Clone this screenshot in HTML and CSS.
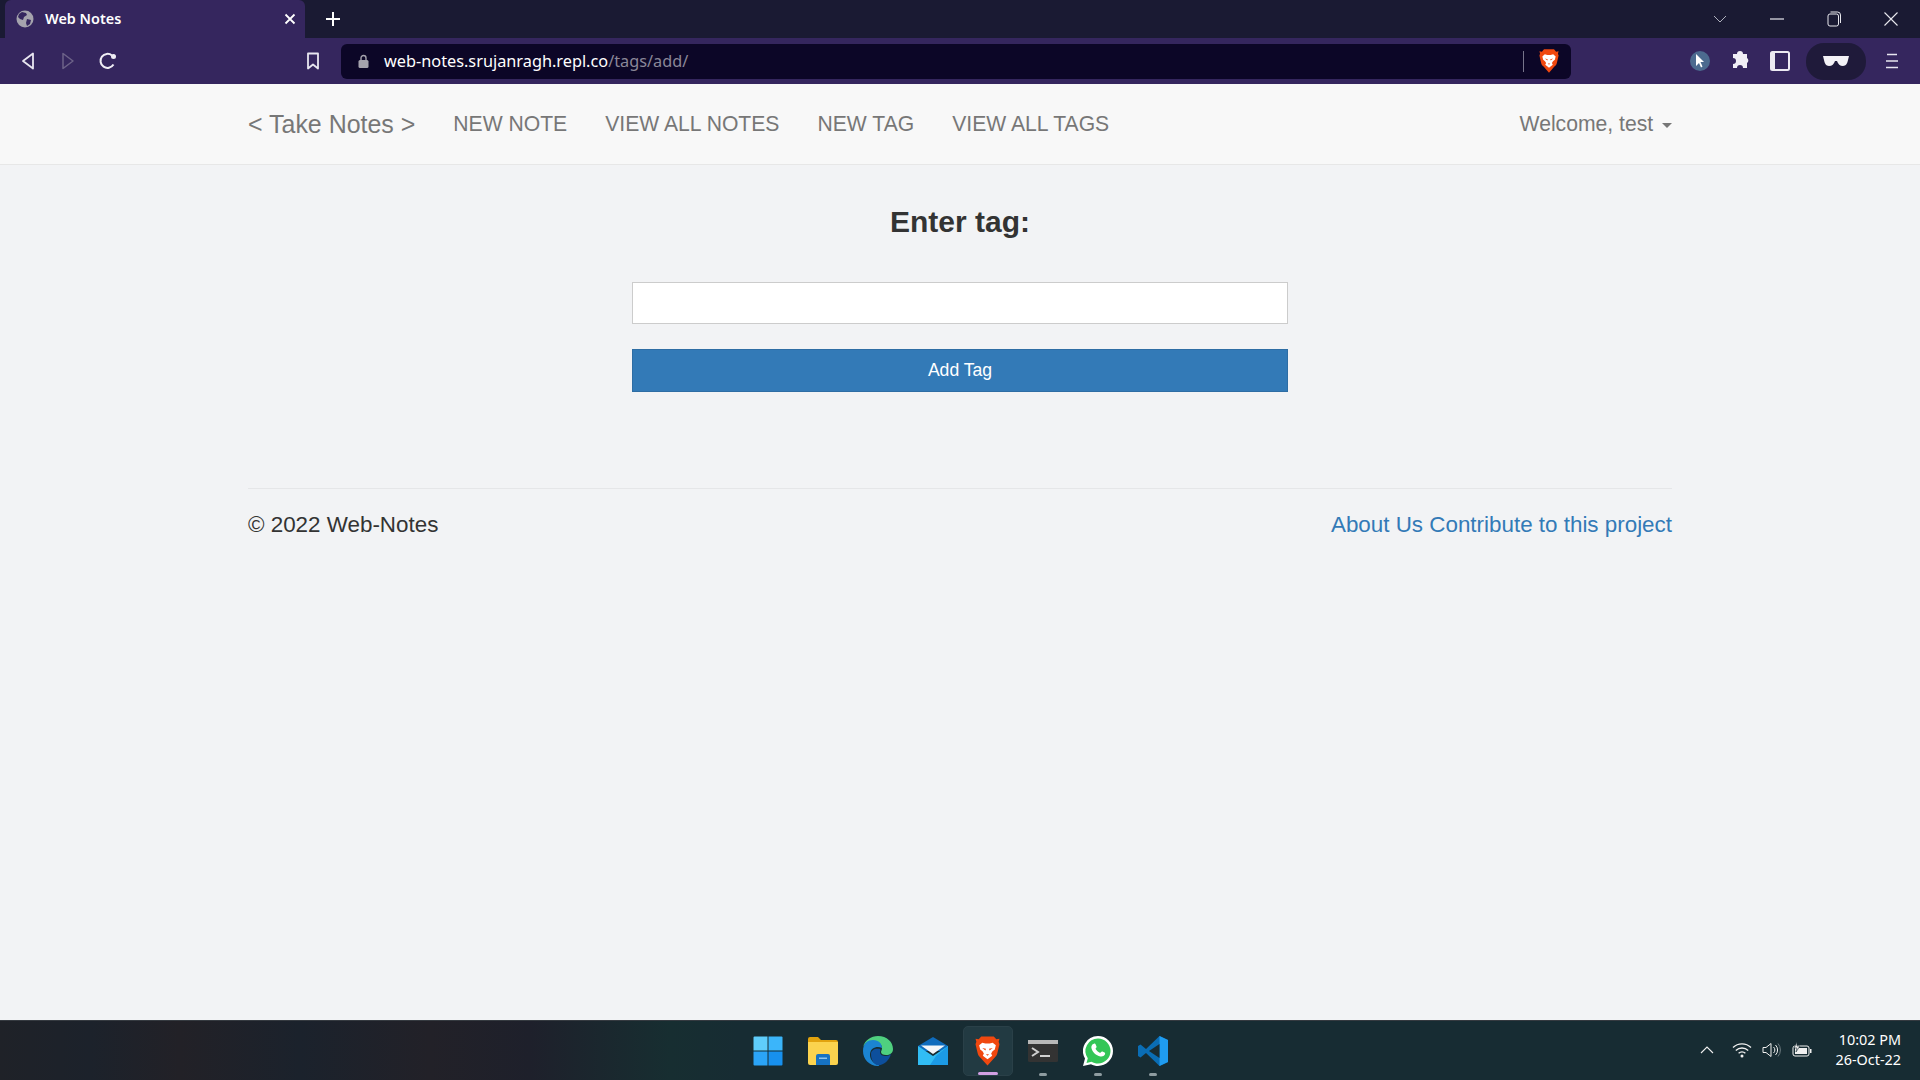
FILE: index.html
```html
<!DOCTYPE html>
<html>
<head>
    <title>Web Notes</title>
    <link rel="stylesheet" href="styles.css">
</head>
<body>
<svg class="defs" width="0" height="0">
    <symbol id="brave" viewBox="0 0 24 28">
        <path d="M6 0h12l2.500 2.800 3-.6-.8 3 .8 2.300-2 8.500c-.5 2-1.300 3.400-3 4.600L12 28l-6.500-7.400c-1.700-1.200-2.500-2.600-3-4.600l-2-8.500.8-2.300-.8-3 3 .6z" fill="#f0480f"/>
        <path d="M7 6l3 .8h4L17 6l3 2.500-1 4-2.200 1.800-1.300 2 1 2.200L12 22l-4.500-3.500 1-2.200-1.300-2L5 12.500l-1-4z" fill="#fff"/>
        <path d="M7 11l3.500.8-.5 1.700zM17 11l-3.500.8.5 1.700zM10.500 17h3L12 18.500z" fill="#f0480f"/>
    </symbol>
</svg>
<div class="browser">
    <div class="tabstrip">
        <div class="tab">
            <svg class="favicon" width="18" height="18" viewBox="0 0 18 18"><circle cx="9" cy="9" r="8.500" fill="#a5a3ad"/><path d="M6 2l4 1 1 2-3 2-1 3-3-1-2-2 1-3zM11 9l4 1-1 4-3 2-1-3z" fill="#35265e"/></svg>
            <span class="tab_title">Web Notes</span>
            <svg class="tab_close" width="12" height="12" viewBox="0 0 12 12"><path d="M1.500 1.500l9 9M10.500 1.500l-9 9" stroke="#fff" stroke-width="1.800"/></svg>
        </div>
        <svg class="newtab" width="16" height="16" viewBox="0 0 16 16"><path d="M8 1v14M1 8h14" stroke="#fff" stroke-width="2"/></svg>
        <div class="window_btns">
            <svg width="14" height="8" viewBox="0 0 14 8"><path d="M1 1l6 6 6-6" stroke="#aeb0bd" fill="none"/></svg>
            <svg width="14" height="2" viewBox="0 0 14 2"><path d="M0 1h14" stroke="#e8e8ee" stroke-width="1.200"/></svg>
            <svg width="14" height="16" viewBox="0 0 14 16"><rect x="1" y="3" width="10.500" height="12" rx="2" stroke="#e8e8ee" fill="none"/><path d="M3.500 1h7a3 3 0 0 1 3 3v8" stroke="#e8e8ee" fill="none"/></svg>
            <svg width="14" height="14" viewBox="0 0 14 14"><path d="M.5.5l13 13M13.500.5l-13 13" stroke="#e8e8ee" stroke-width="1.100"/></svg>
        </div>
    </div>

    <div class="toolbar">
        <div class="nav_btns">
            <svg width="14" height="18" viewBox="0 0 14 18"><path d="M12 1.500v15L2 9z" stroke="#e8e6f0" stroke-width="1.800" fill="none" stroke-linejoin="round"/></svg>
            <svg width="14" height="18" viewBox="0 0 14 18"><path d="M2 1.500v15L12 9z" stroke="#6c6288" stroke-width="1.500" fill="none" stroke-linejoin="round"/></svg>
            <svg width="18" height="18" viewBox="0 0 18 18"><path d="M14.500 12.500A7 7 0 1 1 13 3.500" stroke="#f0eef5" stroke-width="2" fill="none"/><circle cx="14.500" cy="4.500" r="2.500" fill="#f0eef5"/></svg>
        </div>
        <svg class="bookmark" width="14" height="18" viewBox="0 0 14 18"><path d="M2 1.500h10v15l-5-4-5 4z" stroke="#e8e6f0" stroke-width="1.800" fill="none" stroke-linejoin="round"/></svg>
        <div class="urlbar">
            <svg class="lock" width="11" height="14" viewBox="0 0 11 14"><path d="M3 6V4a2.500 2.500 0 0 1 5 0v2" stroke="#a5a3ad" stroke-width="1.400" fill="none"/><rect x="0.500" y="6" width="10" height="8" rx="1.500" fill="#a5a3ad"/></svg>
            <span class="url_host">web-notes.srujanragh.repl.co</span><span class="url_path">/tags/add/</span>
            <div class="url_end">
                <span class="url_divider"></span>
                <svg width="20" height="24"><use href="#brave"/></svg>
            </div>
        </div>
        <div class="ext_btns">
            <span class="ext_cursor"><svg width="10" height="14" viewBox="0 0 10 14"><path d="M1 0l8 8H5.500l2 4.500-1.500 1-2-4.500L1 12z" fill="#fff"/></svg></span>
            <svg width="20" height="20" viewBox="0 0 20 20"><path d="M7 4a3 3 0 0 1 6 0h4v4a3 3 0 0 1 0 5v5h-4a3 3 0 0 0-6 0H3v-4a3 3 0 0 0 0-6V4z" fill="#f0eef5" transform="translate(0 -1)"/></svg>
            <svg width="20" height="20" viewBox="0 0 20 20"><rect x="1" y="1" width="18" height="18" rx="1.500" stroke="#ece9f2" stroke-width="2" fill="#35265e"/><rect x="1" y="1" width="4" height="18" fill="#ece9f2"/></svg>
        </div>
        <div class="glasses">
            <svg width="26" height="10" viewBox="0 0 26 10"><path d="M0 0h26l-1 4c-.500 3-2 6-5 6s-5-2-6-5h-2c-1 3-3 5-6 5S1.500 7 1 4z" fill="#f4f2f7"/></svg>
        </div>
        <svg class="menu_btn" width="14" height="16" viewBox="0 0 14 16"><path d="M2 1.500h10M1 8h12M1 14.500h12" stroke="#e8e6f0" stroke-width="1.700"/></svg>
    </div>

    <div class="navbar">
        <div class="nav_inner">
            <a class="brand">&lt; Take Notes &gt;</a>
            <a class="nav_link">NEW NOTE</a>
            <a class="nav_link">VIEW ALL NOTES</a>
            <a class="nav_link">NEW TAG</a>
            <a class="nav_link">VIEW ALL TAGS</a>
            <a class="welcome">Welcome, test <span class="caret"></span></a>
        </div>
    </div>

    <div class="main">
        <h2 class="heading">Enter tag:</h2>
        <input class="tag_input" type="text">
        <button class="add_btn">Add Tag</button>
        <div class="footer">
            <span>&copy; 2022 Web-Notes</span>
            <span class="footer_links"><a>About Us</a> <a>Contribute to this project</a></span>
        </div>
    </div>

    <div class="taskbar">
        <div class="task_apps">
            <div class="task_item">
                <svg width="30" height="30" viewBox="0 0 30 30"><path d="M.500 1.500a1 1 0 0 1 1-1h13v14H.500z" fill="#5fcdfb"/><path d="M15.500.500h13a1 1 0 0 1 1 1v13h-14z" fill="#3bb5fa"/><path d="M.500 15.500h14v14h-13a1 1 0 0 1-1-1z" fill="#2ba4f7"/><path d="M15.500 15.500h14v13a1 1 0 0 1-1 1h-13z" fill="#1790ee"/></svg>
            </div>
            <div class="task_item">
                <svg width="30" height="28" viewBox="0 0 30 28"><path d="M0 2a2 2 0 0 1 2-2h8l3 3h15a2 2 0 0 1 2 2v3H0z" fill="#e2a30e"/><path d="M0 5h30v21a2 2 0 0 1-2 2H2a2 2 0 0 1-2-2z" fill="#fbd34e"/><path d="M8 19a2 2 0 0 1 2-2h10a2 2 0 0 1 2 2v9H8z" fill="#1672c2"/><rect x="11" y="20.500" width="8" height="1.500" fill="#8cc4ee"/></svg>
            </div>
            <div class="task_item">
                <svg width="30" height="30" viewBox="0 0 30 30"><path d="M15 0c9 0 15 6 15 13 0 4-3 6-7 6-3 0-5-1-5-3 0-1 1-2 1-4 0-4-4-7-9-7-4 0-8 2-10 6C2 4 8 0 15 0z" fill="#4fd07f"/><path d="M0 15C0 7 5 4 10 4c6 0 9 4 9 8-4-2-12-1-12 7 0 5 4 9 9 10 1 .5-1 1-1 1C6 30 0 23 0 15z" fill="#1b84d2"/><path d="M8 18c0-4 4-6 9-5 1 1 0 2 0 3 0 3 3 4 6 4 2 0 4-1 5-2-2 7-8 12-14 11-3-1-6-5-6-11z" fill="#0d4f9c"/></svg>
            </div>
            <div class="task_item">
                <svg width="30" height="28" viewBox="0 0 30 28"><path d="M15 0l15 9v5H0V9z" fill="#0f6cbd"/><path d="M3 8.500h24L15 17z" fill="#f4f6f8"/><path d="M0 9l15 10L30 9v19H0z" fill="#31bdf4"/><path d="M30 28H12l6-9 12-10z" fill="#1c9be6"/></svg>
            </div>
            <div class="task_item task_active">
                <svg width="25" height="30"><use href="#brave"/></svg>
                <span class="task_dot dot_active"></span>
            </div>
            <div class="task_item">
                <svg width="30" height="22" viewBox="0 0 30 22"><rect width="30" height="22" rx="1.500" fill="#333"/><rect width="30" height="4" fill="#b8b8b8"/><path d="M4 8l6 4-6 4" stroke="#d0d0d0" stroke-width="2" fill="none"/><path d="M12 16h10" stroke="#d0d0d0" stroke-width="2"/></svg>
                <span class="task_dot"></span>
            </div>
            <div class="task_item">
                <svg width="30" height="30" viewBox="0 0 30 30"><path d="M15 0a15 15 0 0 1 0 30c-2.500 0-5-.7-7-1.800L0 30l2-7.500A15 15 0 0 1 15 0z" fill="#fff"/><path d="M15 2.500a12.500 12.500 0 0 1 0 25c-2.400 0-4.500-.7-6.500-1.800l-5 1.300 1.300-4.800A12.500 12.500 0 0 1 15 2.500z" fill="#33c657"/><path d="M10.500 8c1-.8 1.800-.5 2.200.4l.8 2c.2.500 0 1-.7 1.800-.3.300-.3.600 0 1 1 1.600 2.200 2.700 3.900 3.500.4.200.700.100 1-.2.800-1 1.200-1.200 1.800-.9l2 1c.7.400.8 1 .4 2-.7 1.500-2.800 2.200-4.500 1.800-4.500-1-8-4.500-9-8.500-.3-1.500.5-3 1.600-3.900z" fill="#fff"/></svg>
                <span class="task_dot"></span>
            </div>
            <div class="task_item">
                <svg width="30" height="30" viewBox="0 0 30 30"><path d="M21.500 0L30 4v22l-8.500 4L8 17l-5.500 4.500L0 20V10l2.500-1.500L8 13z" fill="#0a6db5"/><path d="M21.500 0L30 4v22l-8.500 4z" fill="#1f9cf0"/><path d="M21.500 8L11 15l10.500 7z" fill="#182c33"/></svg>
                <span class="task_dot"></span>
            </div>
        </div>
        <div class="tray">
            <svg class="tray_chevron" width="14" height="8" viewBox="0 0 14 8"><path d="M1 7l6-6 6 6" stroke="#f0f0f0" stroke-width="1.100" fill="none"/></svg>
            <svg class="tray_wifi" width="20" height="16" viewBox="0 0 20 16"><path d="M1 5.500a13 13 0 0 1 18 0M3.800 8.500a9 9 0 0 1 12.400 0M6.600 11.300a5 5 0 0 1 6.800 0" stroke="#f0f0f0" stroke-width="1.300" fill="none"/><circle cx="10" cy="14" r="1.500" fill="#f0f0f0"/></svg>
            <svg class="tray_icon" width="20" height="16" viewBox="0 0 20 16"><path d="M1 5.500h3L9 1.500v13l-5-4H1z" stroke="#f0f0f0" fill="none"/><path d="M11.500 5a4 4 0 0 1 0 6M13.500 3a7 7 0 0 1 0 10" stroke="#f0f0f0" fill="none"/><path d="M16 1.500a10 10 0 0 1 0 13" stroke="#6c7a7f" fill="none"/></svg>
            <svg class="tray_icon" width="20" height="16" viewBox="0 0 20 16"><rect x="1" y="4" width="16" height="10" rx="2" stroke="#f0f0f0" fill="none"/><rect x="3" y="6" width="12" height="6" fill="#f0f0f0"/><rect x="18" y="7" width="1.500" height="4" fill="#f0f0f0"/><path d="M5 0L2 6h3l-1 4 4-6H5z" fill="#f0f0f0" stroke="#182c33" stroke-width=".6"/></svg>
            <div class="clock">
                <div>10:02 PM</div>
                <div>26-Oct-22</div>
            </div>
        </div>
    </div>
</div>
</body>
</html>
```

FILE: styles.css
```css
* {
  box-sizing: border-box;
}

body {
  margin: 0;
  background-color: #f2f3f5;
  color: #333;
  font-family: "Liberation Sans", Arial, sans-serif;
}

a {
  text-decoration: none;
}

.defs {
  display: block;
}

.browser {
  display: flex;
  flex-direction: column;
  height: 1080px;
  overflow: hidden;
}

/* tab strip */
.tabstrip {
  display: flex;
  align-items: center;
  height: 38px;
  padding-left: 5px;
  background-color: #1a1a33;
}

.tab {
  display: flex;
  align-items: center;
  width: 300px;
  height: 38px;
  padding: 0 9px 0 11px;
  background-color: #35265e;
  border-radius: 6px 6px 0 0;
}

.tab_title {
  flex: 1;
  margin-left: 11px;
  margin-bottom: 2px;
  color: #fff;
  font-family: "Noto Sans", sans-serif;
  font-size: 14.4px;
  font-weight: 600;
}

.newtab {
  margin-left: 20px;
}

.window_btns {
  display: flex;
  align-items: center;
  justify-content: space-between;
  width: 185px;
  margin-left: auto;
  margin-right: 22px;
}

/* toolbar */
.toolbar {
  display: flex;
  align-items: center;
  height: 46px;
  padding-left: 8px;
  background-color: #35265e;
}

.nav_btns {
  display: flex;
  width: 120px;
}

.nav_btns svg {
  width: 40px;
}

.bookmark {
  margin-left: 178px;
}

.urlbar {
  display: flex;
  align-items: center;
  width: 1230px;
  height: 35px;
  margin-left: 21px;
  padding-left: 17px;
  background-color: #0c0627;
  border-radius: 6px;
}

.url_host {
  margin-left: 15px;
  color: #fff;
  font-family: "Noto Sans", sans-serif;
  font-size: 16.3px;
}

.url_path {
  color: #8a8798;
  font-family: "Noto Sans", sans-serif;
  font-size: 16.3px;
}

.url_end {
  display: flex;
  align-items: center;
  margin-left: auto;
  padding-right: 12px;
}

.url_divider {
  width: 1px;
  height: 21px;
  margin-right: 15px;
  background-color: #77748a;
}

.ext_btns {
  display: flex;
  align-items: center;
  margin-left: 119px;
  gap: 20px;
}

.ext_cursor {
  display: flex;
  align-items: center;
  justify-content: center;
  width: 20px;
  height: 20px;
  background-color: #4c6a8f;
  border-radius: 50%;
}

.glasses {
  display: flex;
  align-items: center;
  justify-content: center;
  width: 60px;
  height: 37px;
  margin-left: 16px;
  background-color: #1f1a3a;
  border-radius: 18px;
}

.menu_btn {
  margin-left: 19px;
}

/* navbar */
.navbar {
  height: 81px;
  background-color: #f8f8f8;
  border-bottom: 1px solid #e7e7e7;
}

.nav_inner {
  display: flex;
  align-items: center;
  width: 1424px;
  height: 80px;
  margin: 0 auto;
  color: #777;
}

.brand {
  font-size: 24.95px;
  margin-right: 38px;
}

.nav_link {
  font-size: 21.15px;
  margin-right: 38px;
}

.welcome {
  margin-left: auto;
  font-size: 21.15px;
}

.caret {
  display: inline-block;
  margin-left: 3px;
  vertical-align: middle;
  border-top: 5px solid #777;
  border-left: 5px solid transparent;
  border-right: 5px solid transparent;
}

/* form */
.main {
  display: flex;
  flex: 1;
  flex-direction: column;
  align-items: center;
}

.heading {
  margin: 39px 0 0;
  font-size: 30px;
  line-height: 36px;
}

.tag_input {
  width: 656px;
  height: 42px;
  margin-top: 42px;
  background-color: #fff;
  border: 1px solid #ccc;
}

.add_btn {
  width: 656px;
  height: 43px;
  margin-top: 25px;
  background-color: #337ab7;
  color: #fff;
  font-family: "Liberation Sans", Arial, sans-serif;
  font-size: 17.6px;
  border: 1px solid #2e6da4;
}

.footer {
  display: flex;
  justify-content: space-between;
  width: 1424px;
  margin-top: 96px;
  padding-top: 23px;
  font-size: 22.4px;
  border-top: 1px solid #e5e6e8;
}

.footer_links {
  color: #337ab7;
}

/* taskbar */
.taskbar {
  display: flex;
  justify-content: center;
  position: relative;
  height: 60px;
  background: linear-gradient(90deg, #1f2228 0, #1c222b 90px, #222127 180px, #1b222c 300px, #222128 430px, #1e202b 530px, #172e31 670px, #172c33 740px);
  border-top: 1px solid #353a40;
}

.task_apps {
  display: flex;
  align-items: center;
}

.task_item {
  display: flex;
  align-items: center;
  justify-content: center;
  position: relative;
  width: 50px;
  height: 50px;
  margin: 0 2.5px;
  border-radius: 5px;
}

.task_active {
  background-color: #223a42;
  border: 1px solid #2a4048;
}

.task_dot {
  position: absolute;
  bottom: 0;
  width: 8px;
  height: 3px;
  background-color: #8e9ca1;
  border-radius: 2px;
}

.dot_active {
  width: 20px;
  background-color: #d19fe3;
}

.tray {
  display: flex;
  align-items: center;
  position: absolute;
  top: 0;
  right: 19px;
  height: 58px;
  color: #fff;
  font-family: "Noto Sans", sans-serif;
  font-size: 14.4px;
}

.tray_wifi {
  margin-left: 18px;
}

.tray_icon {
  margin-left: 10px;
}

.clock {
  width: 80px;
  margin-left: 9px;
  line-height: 20px;
  text-align: right;
}
```
